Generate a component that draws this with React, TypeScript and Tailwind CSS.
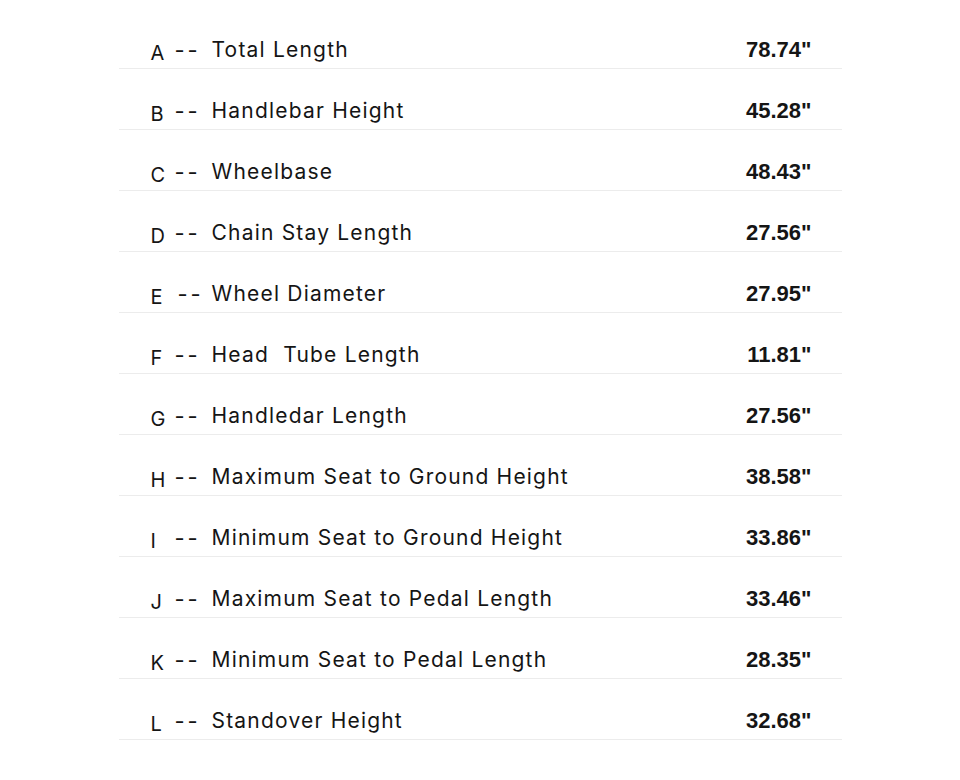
import React from "react";

interface Spec {
  letter: string;
  label: string;
  value: string;
  wide?: boolean;
}

const SPECS: Spec[] = [
  { letter: "A", label: "Total Length", value: "78.74\"" },
  { letter: "B", label: "Handlebar Height", value: "45.28\"" },
  { letter: "C", label: "Wheelbase", value: "48.43\"" },
  { letter: "D", label: "Chain Stay Length", value: "27.56\"" },
  { letter: "E", label: "Wheel Diameter", value: "27.95\"", wide: true },
  { letter: "F", label: "Head\u00a0 Tube Length", value: "11.81\"" },
  { letter: "G", label: "Handledar Length", value: "27.56\"" },
  { letter: "H", label: "Maximum Seat to Ground Height", value: "38.58\"" },
  { letter: "I", label: "Minimum Seat to Ground Height", value: "33.86\"" },
  { letter: "J", label: "Maximum Seat to Pedal Length", value: "33.46\"" },
  { letter: "K", label: "Minimum Seat to Pedal Length", value: "28.35\"" },
  { letter: "L", label: "Standover Height", value: "32.68\"" },
];

export default function App() {
  return (
    <div className="min-h-[780px] w-full bg-white pt-[8px] text-[#151515] font-['Inter','Noto_Sans',sans-serif]">
      <div className="mx-auto w-[723px]">
        {SPECS.map((spec) => (
          <div
            key={spec.letter}
            className="flex h-[61px] items-end border-b-[1.5px] border-[#ececec] pb-[4px]"
          >
            {/* lettre + tirets */}
            <span className="ml-[32px] w-[24px] translate-y-[3px] text-[20px] leading-[28px]">
              {spec.letter}
            </span>
            <span
              className={`${spec.wide ? "pl-[3px] w-[37px]" : "w-[37px]"} text-[22px] leading-[28px] tracking-[3px]`}
            >
              --
            </span>
            <span className="flex-1 text-[21px] leading-[28px] tracking-[1.2px]">
              {spec.label}
            </span>
            <span className="pr-[30px] text-[22px] font-bold leading-[28px] font-['Liberation_Sans',Arial,sans-serif]">
              {spec.value}
            </span>
          </div>
        ))}
      </div>
    </div>
  );
}
